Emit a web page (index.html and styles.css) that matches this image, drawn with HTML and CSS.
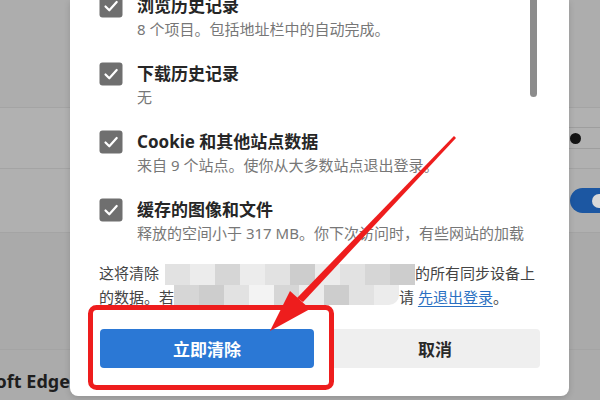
FILE: index.html
```html
<!DOCTYPE html>
<html lang="zh-CN">

<head>
    <meta charset="UTF-8">
    <title>清除浏览数据</title>
    <link rel="stylesheet" href="styles.css">
</head>

<body>
    <!-- settings page behind the dim overlay -->
    <div class="page">
        <div class="band band-top"></div>
        <div class="band band-radio">
            <div class="radio-row"><span class="radio"></span></div>
        </div>
        <div class="band band-toggle">
            <div class="toggle"><span class="knob"></span></div>
        </div>
        <div class="band band-mid"></div>
        <div class="band band-bottom">
            <span class="brand">Microsoft Edge</span>
        </div>
    </div>

    <div class="dialog">
        <div class="scroll">
            <div class="options">
                <div class="option">
                    <svg class="box" viewBox="0 0 24 24"><rect x="0.5" y="0.5" width="23" height="23" rx="3" fill="#6f6f6f"/><path d="M6.5 12.5l3.8 3.8 7.4-8.3" fill="none" stroke="#fff" stroke-width="2.2" stroke-linecap="round" stroke-linejoin="round"/></svg>
                    <div class="text">
                        <div class="title">浏览历史记录</div>
                        <div class="sub">8 个项目。包括地址栏中的自动完成。</div>
                    </div>
                </div>
                <div class="option">
                    <svg class="box" viewBox="0 0 24 24"><rect x="0.5" y="0.5" width="23" height="23" rx="3" fill="#6f6f6f"/><path d="M6.5 12.5l3.8 3.8 7.4-8.3" fill="none" stroke="#fff" stroke-width="2.2" stroke-linecap="round" stroke-linejoin="round"/></svg>
                    <div class="text">
                        <div class="title">下载历史记录</div>
                        <div class="sub">无</div>
                    </div>
                </div>
                <div class="option">
                    <svg class="box" viewBox="0 0 24 24"><rect x="0.5" y="0.5" width="23" height="23" rx="3" fill="#6f6f6f"/><path d="M6.5 12.5l3.8 3.8 7.4-8.3" fill="none" stroke="#fff" stroke-width="2.2" stroke-linecap="round" stroke-linejoin="round"/></svg>
                    <div class="text">
                        <div class="title">Cookie 和其他站点数据</div>
                        <div class="sub">来自 9 个站点。使你从大多数站点退出登录。</div>
                    </div>
                </div>
                <div class="option">
                    <svg class="box" viewBox="0 0 24 24"><rect x="0.5" y="0.5" width="23" height="23" rx="3" fill="#6f6f6f"/><path d="M6.5 12.5l3.8 3.8 7.4-8.3" fill="none" stroke="#fff" stroke-width="2.2" stroke-linecap="round" stroke-linejoin="round"/></svg>
                    <div class="text">
                        <div class="title">缓存的图像和文件</div>
                        <div class="sub">释放的空间小于 317 MB。你下次访问时，有些网站的加载速度可能会更慢。</div>
                    </div>
                </div>
            </div>
            <div class="thumb"></div>
        </div>

        <div class="note">
            <div class="line">这将清除<span class="blur blur-1"><i class="c2"></i><i class="c1"></i><i class="c3"></i><i class="c1"></i><i class="c2"></i><i class="c4"></i><i class="c1"></i><i class="c2"></i><i class="c3"></i><i class="c4"></i></span>的所有同步设备上</div>
            <div class="line">的数据。若<span class="blur blur-2"><i class="c3"></i><i class="c4"></i><i class="c2"></i><i class="c5"></i><i class="c3"></i><i class="c1"></i><i class="c4"></i><i class="c2"></i><i class="c1"></i></span>请&nbsp;<a class="link">先退出登录</a>。</div>
        </div>

        <div class="actions">
            <button class="btn primary">立即清除</button>
            <button class="btn secondary">取消</button>
        </div>
    </div>

    <!-- red annotation drawn on top of the screenshot -->
    <svg class="mark" viewBox="0 0 600 400">
        <rect x="90.5" y="307.5" width="241" height="80" rx="6" fill="none" stroke="#ee1d1d" stroke-width="5"/>
        <polygon points="456,138 454,136 297,298 303,302" fill="#ee1d1d"/>
        <polygon points="270,331 290,291 310,309" fill="#ee1d1d"/>
    </svg>
</body>

</html>
```

FILE: styles.css
```css
* {
    margin: 0;
    padding: 0;
    box-sizing: border-box;
}

body {
    position: relative;
    width: 600px;
    height: 400px;
    overflow: hidden;
    background: #ababab;
    font-family: "Noto Sans", "Noto Sans CJK SC", sans-serif;
}

/* background page */
.page {
    display: flex;
    flex-direction: column;
    height: 400px;
}

.band {
    border-bottom: 1px solid #a4a4a4;
}

.band-top {
    height: 108px;
    background: #adadad;
}

.band-radio {
    height: 61px;
    background: #b1b1b1;
    display: flex;
    flex-direction: column;
    align-items: flex-end;
    padding-top: 19px;
}

.radio-row {
    width: 31px;
    height: 22px;
    border-top: 1px solid #9e9e9e;
    border-bottom: 1px solid #9e9e9e;
    display: flex;
    align-items: center;
    padding-left: 1px;
}

.radio {
    width: 11px;
    height: 11px;
    border-radius: 50%;
    background: #141414;
}

.band-toggle {
    height: 64px;
    background: #b0b0b0;
    display: flex;
    justify-content: flex-end;
    align-items: center;
}

.toggle {
    width: 30px;
    height: 25px;
    border-radius: 13px 0 0 13px;
    background: #1c57a2;
    display: flex;
    align-items: center;
    justify-content: flex-end;
}

.knob {
    width: 14px;
    height: 14px;
    border-radius: 50%;
    background: #d9d9d9;
    margin-right: -6px;
}

.band-mid {
    height: 117px;
    background: #aaaaaa;
}

.band-bottom {
    flex: 1;
    border-bottom: 0;
    background: #ababab;
    padding-top: 19px;
}

.brand {
    display: block;
    margin-left: -64px;
    font-size: 18px;
    font-weight: 700;
    line-height: 24px;
    color: #1e1e1e;
    white-space: nowrap;
}

/* dialog */
.dialog {
    position: absolute;
    left: 70px;
    top: 0;
    width: 499px;
    height: 396px;
    background: #fff;
    border-radius: 0 0 8px 8px;
    box-shadow: 0 2px 6px rgba(0, 0, 0, 0.15);
}

.scroll {
    position: relative;
    height: 244px;
    overflow: hidden;
    padding: 0 29px;
}

.options {
    display: flex;
    flex-direction: column;
    gap: 22px;
    margin-top: -6px;
}

.option {
    display: flex;
    gap: 14px;
}

.box {
    flex: none;
    width: 24px;
    height: 24px;
}

.title {
    font-size: 17px;
    font-weight: 700;
    line-height: 24px;
    color: #262626;
}

.sub {
    max-width: 392px;
    font-size: 15px;
    line-height: 22px;
    color: #777;
}

.thumb {
    position: absolute;
    left: 460px;
    top: -8px;
    width: 7px;
    height: 105px;
    border-radius: 4px;
    background: #8c8c8c;
}

.note {
    margin-top: 17px;
    padding: 0 29px;
    font-size: 15px;
    line-height: 24px;
    color: #444;
}

.line {
    display: flex;
    height: 24px;
    white-space: nowrap;
}

.blur {
    display: flex;
}

.blur i {
    flex: 1;
}

.blur-1 {
    width: 250px;
    height: 21px;
    margin-left: 6px;
    align-self: flex-end;
}

.blur-2 {
    width: 225px;
    height: 20px;
    align-self: flex-start;
    border-bottom-right-radius: 10px;
    overflow: hidden;
}

.c1 { background: #ececec; }
.c2 { background: #e2e2e2; }
.c3 { background: #d6d6d6; }
.c4 { background: #cdcdcd; }
.c5 { background: #f3f3f3; }

.link {
    color: #2a70c2;
    text-decoration: underline;
    text-underline-offset: 3px;
}

.actions {
    display: grid;
    grid-template-columns: 214px 210px;
    gap: 16px;
    margin-top: 20px;
    padding-left: 30px;
}

.btn {
    height: 39px;
    border: 0;
    border-radius: 4px;
    font-family: "Noto Sans CJK SC", sans-serif;
    font-size: 17px;
    font-weight: 700;
}

.primary {
    background: #2b78d5;
    color: #fff;
}

.secondary {
    background: #efefef;
    color: #2a2a2a;
}

.mark {
    position: absolute;
    left: 0;
    top: 0;
    width: 600px;
    height: 400px;
    pointer-events: none;
}
```
